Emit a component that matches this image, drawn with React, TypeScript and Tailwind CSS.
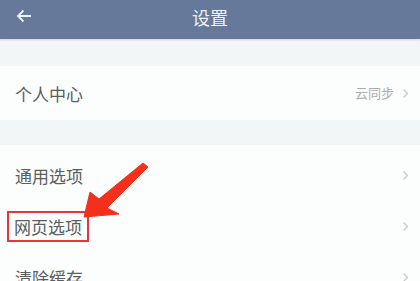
const Chevron = () => (
  <svg width="7" height="11" viewBox="0 0 7 11" className="shrink-0">
    <path d="M1.5 1.5 L5.5 5.5 L1.5 9.5" fill="none" stroke="#c4c8cc" strokeWidth="1.2" />
  </svg>
);

const Row = ({ label, boxed }: { label: string; boxed?: boolean }) => (
  <div className="h-[51px] flex items-center justify-between pl-[15px] pr-[11px]">
    <span
      className={`text-[17px] text-[#5a5d60] leading-none ${
        boxed ? 'outline-2 outline-[#e8343a] outline-offset-[5px] -ml-px' : ''
      }`}
    >
      {label}
    </span>
    <Chevron />
  </div>
);

export default function App() {
  return (
    <div
      className="relative w-[420px] h-[281px] overflow-hidden bg-[#f3f6f7]"
      style={{ fontFamily: '"Noto Sans CJK SC", "Noto Sans", sans-serif' }}
    >
      <header className="h-[39px] bg-[#66799a] flex items-center relative shadow-[0_1px_2px_rgba(0,0,0,0.15)] pb-[6px]">
        <svg width="16" height="14" viewBox="0 0 16 14" className="absolute left-[16px] top-[9px]">
          <path d="M15 7 H2 M7.5 1.5 L2 7 L7.5 12.5" fill="none" stroke="#eef1f6" strokeWidth="1.8" />
        </svg>
        <h1 className="w-full text-center text-[18px] text-[#eef1f6] leading-none">设置</h1>
      </header>

      <div className="mt-[27px] bg-[#fcfefe] h-[54px] flex items-center justify-between pl-[15px] pr-[11px]">
        <span className="text-[17px] text-[#5a5d60] leading-none">个人中心</span>
        <div className="flex items-center gap-[8px]">
          <span className="text-[13px] text-[#a9acaf]">云同步</span>
          <Chevron />
        </div>
      </div>

      <div className="mt-[25px] bg-[#fcfefe] pt-[5px]">
        <Row label="通用选项" />
        <Row label="网页选项" boxed />
        <Row label="清除缓存" />
      </div>

      <svg width="420" height="281" className="absolute inset-0 pointer-events-none">
        <polygon
          points="84,217 90,192 99,199 143,163 148,167 107,208 119,214"
          fill="#f2301c"
          strokeLinejoin="round"
          stroke="#f2301c"
          strokeWidth="1"
        />
      </svg>
    </div>
  );
}
